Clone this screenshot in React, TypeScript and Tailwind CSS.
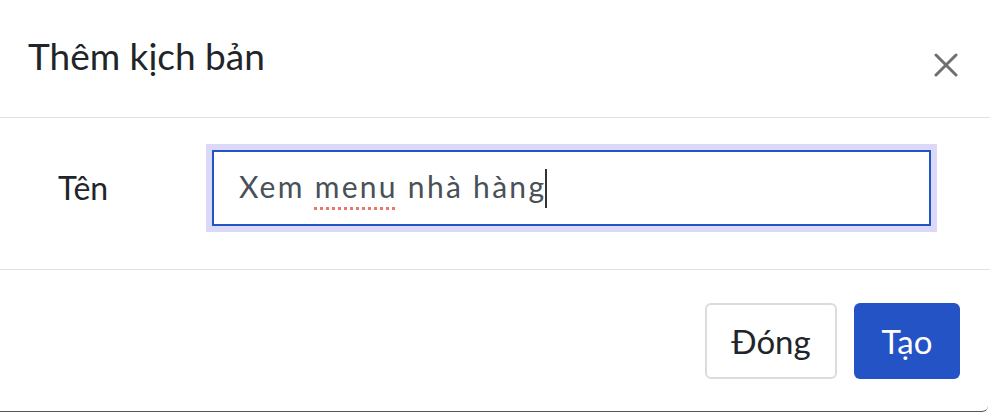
import React from "react";

export default function App() {
  const font = { fontFamily: "Lato, 'Noto Sans', sans-serif" };
  return (
    <div style={font} className="w-[990px] h-[412px] bg-white flex flex-col overflow-hidden">
      <div className="flex-1 flex flex-col border-b border-[#555] rounded-br-[6px] w-[988px]">
        {/* Header */}
        <div className="h-[118px] shrink-0 flex items-center justify-between pl-[28px] pr-[32px] border-b border-[#dee2e6] w-[990px]">
          <h5 className="text-[37px] text-[#212529] leading-none mb-[6px]">Thêm kịch bản</h5>
          <svg width="24" height="24" viewBox="0 0 24 24" className="mt-[12px]">
            <path d="M2 2 L22 22 M22 2 L2 22" stroke="#6f6f6f" strokeWidth="3" strokeLinecap="round" />
          </svg>
        </div>
        {/* Body */}
        <div className="h-[152px] shrink-0 flex items-start pt-[26px] border-b border-[#dee2e6] w-[990px]">
          <div className="w-[206px] pl-[58px] mt-[28px] text-[32px] text-[#212529] leading-none">Tên</div>
          <div className="p-[6px] bg-[#dcd9f8]">
            <div className="w-[719px] h-[76px] border-2 border-[#2453c5] bg-white flex items-center pl-[25px] text-[30px] text-[#495057] leading-none">
              <span className="whitespace-pre tracking-[2.3px] mb-[4px]">
                Xem{" "}
                <span className="underline decoration-dotted decoration-[#e8776c] decoration-[3px] underline-offset-[9px]">menu</span>
                {" "}nhà hàng
              </span>
              <span className="inline-block w-[2px] h-[39px] bg-[#333] -ml-[1px]"></span>
            </div>
          </div>
        </div>
        {/* Footer */}
        <div className="flex-1 flex items-start justify-end pr-[28px] pt-[33px] gap-[17px]">
          <button className="w-[132px] h-[76px] border-2 border-[#dcdcdc] rounded-[6px] bg-white text-[33px] text-[#212529] leading-none">Đóng</button>
          <button className="w-[106px] h-[76px] rounded-[6px] bg-[#2453c5] text-[33px] text-white leading-none">Tạo</button>
        </div>
      </div>
    </div>
  );
}
